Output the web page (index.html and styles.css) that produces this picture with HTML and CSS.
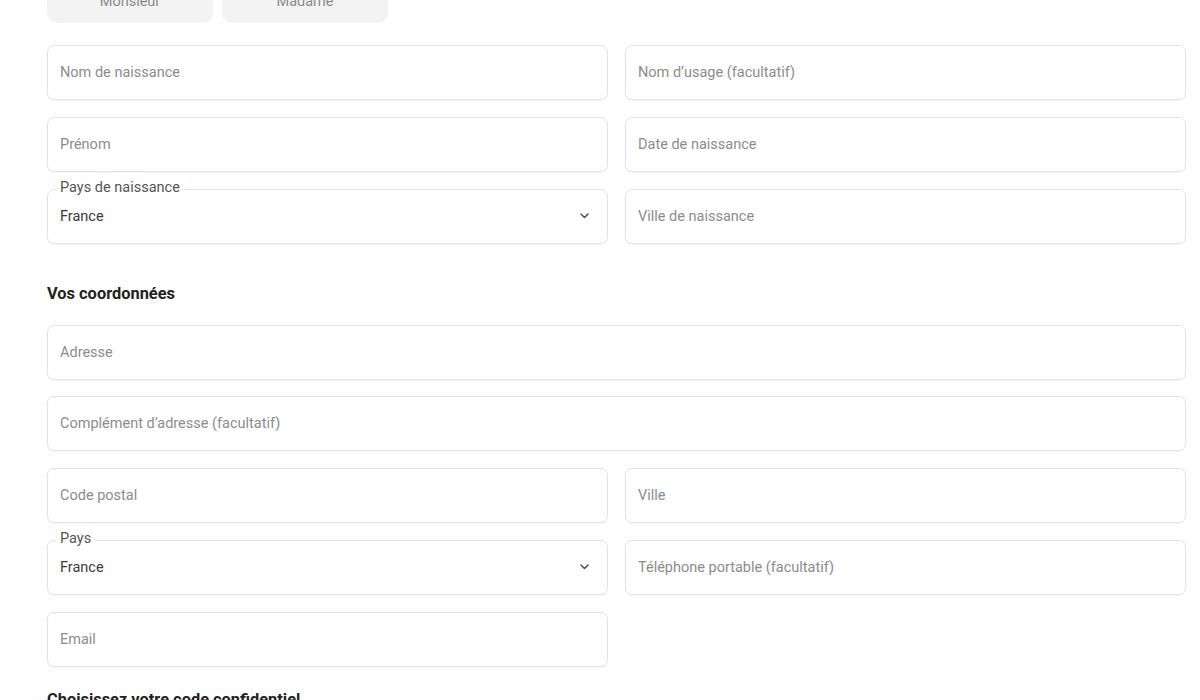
FILE: index.html
```html
<!DOCTYPE html>
<html lang="fr">
<head>
<meta charset="utf-8">
<link rel="stylesheet" href="styles.css">
</head>
<body>
<div class="page">
  <div class="civility">
    <button class="civ-btn">Monsieur</button>
    <button class="civ-btn">Madame</button>
  </div>

  <div class="grid">
    <div class="field"><span class="ph">Nom de naissance</span></div>
    <div class="field"><span class="ph">Nom d’usage (facultatif)</span></div>
    <div class="field"><span class="ph">Prénom</span></div>
    <div class="field"><span class="ph">Date de naissance</span></div>
    <div class="field select">
      <span class="label">Pays de naissance</span>
      <span class="value">France</span>
      <svg class="chev" width="9" height="6" viewBox="0 0 9 6"><path d="M1 1l3.5 3.5L8 1" fill="none" stroke="#555" stroke-width="1.6" stroke-linecap="round" stroke-linejoin="round"/></svg>
    </div>
    <div class="field"><span class="ph">Ville de naissance</span></div>
  </div>

  <h2 class="section">Vos coordonnées</h2>

  <div class="grid">
    <div class="field wide"><span class="ph">Adresse</span></div>
    <div class="field wide"><span class="ph">Complément d’adresse (facultatif)</span></div>
    <div class="field"><span class="ph">Code postal</span></div>
    <div class="field"><span class="ph">Ville</span></div>
    <div class="field select">
      <span class="label">Pays</span>
      <span class="value">France</span>
      <svg class="chev" width="9" height="6" viewBox="0 0 9 6"><path d="M1 1l3.5 3.5L8 1" fill="none" stroke="#555" stroke-width="1.6" stroke-linecap="round" stroke-linejoin="round"/></svg>
    </div>
    <div class="field"><span class="ph">Téléphone portable (facultatif)</span></div>
    <div class="field"><span class="ph">Email</span></div>
  </div>

  <h2 class="section last">Choisissez votre code confidentiel</h2>
</div>
</body>
</html>
```

FILE: styles.css
```css
* { box-sizing: border-box; }
html, body {
  margin: 0;
  padding: 0;
  background: #fff;
  overflow: hidden;
}
body {
  font-family: Roboto, "Liberation Sans", Arial, sans-serif;
  color: #222;
}
.page {
  width: 1139px;
  margin-left: 47px;
  margin-top: -25px;
}
.civility {
  display: flex;
  gap: 9px;
  margin-bottom: 22px;
}
.civ-btn {
  width: 166px;
  height: 48px;
  border: none;
  border-radius: 10px;
  background: #f3f3f4;
  color: #8a8a8a;
  font-family: inherit;
  font-size: 14.5px;
  padding: 4px 0 0;
}
.grid {
  display: grid;
  grid-template-columns: 1fr 1fr;
  column-gap: 17px;
  row-gap: 16.75px;
}
.field {
  position: relative;
  height: 55px;
  border: 1px solid #e3e3e3;
  border-radius: 7px;
  background: #fff;
  display: flex;
  align-items: center;
  padding: 0 12px;
  box-shadow: 0 1px 2px rgba(0,0,0,0.04);
}
.field.wide { grid-column: 1 / span 2; }
.ph {
  font-size: 14.5px;
  color: #8c8c8c;
}
.value {
  font-size: 14.5px;
  color: #3a3a3a;
}
.label {
  position: absolute;
  top: -11px;
  left: 8px;
  padding: 0 4px;
  background: #fff;
  font-size: 14.5px;
  line-height: 17px;
  color: #555;
}
.select { justify-content: space-between; padding-right: 18px; }
.chev { display: block; }
.section {
  margin: 40px 0 21px;
  font-size: 16.4px;
  line-height: 20px;
  font-weight: 700;
  color: #222;
}
.section.last {
  margin-top: 23px;
}
```
